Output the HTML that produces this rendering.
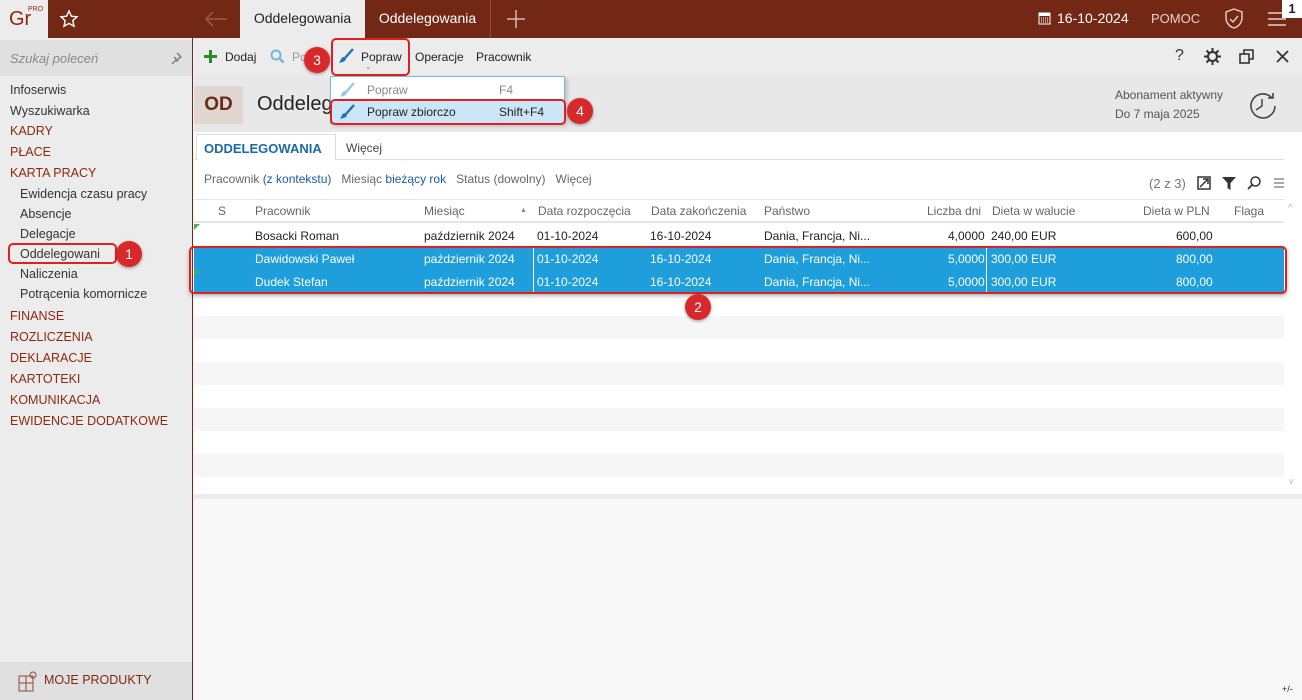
<!DOCTYPE html>
<html><head><meta charset="utf-8"><style>
*{box-sizing:border-box;margin:0;padding:0}
body{width:1302px;height:700px;overflow:hidden;font-family:"Liberation Sans","DejaVu Sans",sans-serif;font-size:12px;color:#222;background:#f8f8f8;position:relative}
.a{position:absolute}
.top{left:0;top:0;width:1302px;height:38px;background:#732815}
.w{color:#fff}
.sb{left:0;top:38px;width:193px;height:662px;background:#ececec;border-right:1px solid #732815}
.sb div.i{position:absolute;left:10px;font-size:12.5px;color:#333}
.sb div.r{color:#8a2a10}
.badge{width:26px;height:26px;border-radius:50%;background:#d8282b;color:#fff;font-size:14px;text-align:center;line-height:26px;box-shadow:0 1px 3px rgba(0,0,0,.4)}
.rb{border:2px solid #e02020;border-radius:5px}
.hd{font-size:12px;color:#666;top:204px}
.row{left:194px;width:1090px;height:23px}
.row span{position:absolute;top:5px;font-size:12px}
.sel span{color:#fff}
</style></head><body>
<div class="a top"></div>
<div class="a" style="left:0;top:0;width:48px;height:38px;background:#ececec"></div>
<div class="a" style="left:9px;top:8px;font-size:20px;color:#8a2a10">Gr</div>
<div class="a" style="left:28px;top:6px;font-size:7px;color:#8a2a10">PRO</div>
<svg class="a" style="left:59px;top:9px" width="20" height="20" viewBox="0 0 20 20"><path d="M10 2l2.4 5.2 5.6.6-4.2 3.8 1.2 5.6L10 14.4 5 17.2l1.2-5.6L2 7.8l5.6-.6z" fill="none" stroke="#fff" stroke-width="1.4"/></svg>
<svg class="a" style="left:204px;top:10px" width="24" height="18"><path d="M2 9h21M9 2L2 9l7 7" fill="none" stroke="#9a5a48" stroke-width="1.5"/></svg>
<div class="a" style="left:240px;top:0;width:125px;height:38px;background:#ececec;font-size:14px;text-align:center;line-height:37px">Oddelegowania</div>
<div class="a w" style="left:365px;top:0;width:126px;height:38px;font-size:14px;text-align:center;line-height:37px;border-right:1px solid #8e4a38">Oddelegowania</div>
<svg class="a" style="left:506px;top:9px" width="20" height="20"><path d="M10 1v18M1 10h18" stroke="#d8b8b0" stroke-width="1.5"/></svg>
<svg class="a" style="left:1038px;top:12px" width="13" height="13"><rect x="1" y="1" width="11" height="11" fill="none" stroke="#fff"/><rect x="1" y="1" width="11" height="3" fill="#fff"/><path d="M3 6h7M3 8h7M3 10h7" stroke="#fff" stroke-dasharray="1 1"/></svg>
<div class="a w" style="left:1057px;top:10px;font-size:14px">16-10-2024</div>
<div class="a" style="left:1151px;top:11px;font-size:13px;color:#e8d0c8">POMOC</div>
<svg class="a" style="left:1224px;top:8px" width="20" height="22"><path d="M10 1l8 3v6c0 5-4 9-8 10-4-1-8-5-8-10V4z" fill="none" stroke="#e8d0c8" stroke-width="1.4"/><path d="M6 11l3 3 5-6" fill="none" stroke="#e8d0c8" stroke-width="1.4"/></svg>
<svg class="a" style="left:1268px;top:12px" width="20" height="14"><path d="M0 1h18M0 7h18M0 13h18" stroke="#e8d0c8" stroke-width="1.4"/></svg>
<div class="a" style="left:1282px;top:0;width:20px;height:18px;background:#fff;font-weight:bold;font-size:13px;text-align:center;line-height:18px">1</div>

<div class="a sb">
<div class="a" style="left:0;top:2px;width:192px;height:36px;background:#e0e0e0"></div>
<div class="a" style="left:10px;top:13px;font-style:italic;color:#888;font-size:13px">Szukaj poleceń</div>
<svg class="a" style="left:170px;top:14px" width="12" height="12"><path d="M7 1l4 4-2 1-2 3-1-1-4 4M4 5l3 3" stroke="#888" stroke-width="1.6" fill="none"/></svg>
<div class="i" style="top:45px">Infoserwis</div>
<div class="i" style="top:66px">Wyszukiwarka</div>
<div class="i r" style="top:86px">KADRY</div>
<div class="i r" style="top:107px">PŁACE</div>
<div class="i r" style="top:128px">KARTA PRACY</div>
<div class="i" style="top:149px;left:20px">Ewidencja czasu pracy</div>
<div class="i" style="top:169px;left:20px">Absencje</div>
<div class="i" style="top:189px;left:20px">Delegacje</div>
<div class="i" style="top:209px;left:20px">Oddelegowani</div>
<div class="i" style="top:229px;left:20px">Naliczenia</div>
<div class="i" style="top:249px;left:20px">Potrącenia komornicze</div>
<div class="i r" style="top:271px">FINANSE</div>
<div class="i r" style="top:292px">ROZLICZENIA</div>
<div class="i r" style="top:313px">DEKLARACJE</div>
<div class="i r" style="top:334px">KARTOTEKI</div>
<div class="i r" style="top:355px">KOMUNIKACJA</div>
<div class="i r" style="top:376px">EWIDENCJE DODATKOWE</div>
<div class="a" style="left:0;top:624px;width:192px;height:38px;background:#e0e0e0"></div>
<svg class="a" style="left:18px;top:632px" width="20" height="22"><rect x="1" y="6" width="14" height="15" fill="none" stroke="#8a4a3a"/><path d="M8 6v15M1 13h14" stroke="#8a4a3a"/><circle cx="15" cy="5" r="3" fill="none" stroke="#8a4a3a"/></svg>
<div class="a" style="left:44px;top:635px;font-size:12.5px;color:#7a2a10">MOJE PRODUKTY</div>
</div>
<div class="a rb" style="left:8px;top:243px;width:109px;height:21px"></div>
<div class="a badge" style="left:116px;top:241px">1</div>

<!-- toolbar -->
<div class="a" style="left:194px;top:38px;width:1108px;height:38px;background:#ececec"></div>
<svg class="a" style="left:204px;top:50px" width="13" height="13"><path d="M6.5 0v13M0 6.5h13" stroke="#2a8a2a" stroke-width="3"/></svg>
<div class="a" style="left:225px;top:50px">Dodaj</div>
<svg class="a" style="left:270px;top:49px" width="15" height="15"><circle cx="6" cy="6" r="4.5" fill="none" stroke="#7ab4d4" stroke-width="2"/><path d="M9.5 9.5l4 4" stroke="#7ab4d4" stroke-width="2.4"/></svg>
<div class="a" style="left:292px;top:50px;color:#999">Pokaż</div>
<div class="a badge" style="left:304px;top:47px">3</div>
<div class="a rb" style="left:331px;top:38px;width:79px;height:38px"></div>
<svg class="a" style="left:338px;top:48px" width="16" height="16"><path d="M15 1L7 10" stroke="#1d72b8" stroke-width="2.4"/><path d="M6 9c-3 0-3 3-5 6 3-1 6-1 7-4z" fill="#1d72b8"/></svg>
<div class="a" style="left:361px;top:50px">Popraw</div>
<div class="a" style="left:365px;top:62px;font-size:8px;color:#888">⌄</div>
<div class="a" style="left:415px;top:50px">Operacje</div>
<div class="a" style="left:476px;top:50px">Pracownik</div>
<div class="a" style="left:1175px;top:47px;font-size:16px;color:#333">?</div>
<svg class="a" style="left:1204px;top:48px" width="17" height="17" viewBox="0 0 17 17"><circle cx="8.5" cy="8.5" r="4.5" fill="none" stroke="#333" stroke-width="2"/><path d="M8.5 0v4M8.5 13v4M0 8.5h4M13 8.5h4M2.5 2.5l3 3M11.5 11.5l3 3M2.5 14.5l3-3M11.5 5.5l3-3" stroke="#333" stroke-width="2"/></svg>
<svg class="a" style="left:1239px;top:49px" width="15" height="15"><rect x="1" y="5" width="9" height="9" fill="none" stroke="#333" stroke-width="1.6"/><path d="M5 5V1h9v9h-4" fill="none" stroke="#333" stroke-width="1.6"/></svg>
<svg class="a" style="left:1276px;top:50px" width="13" height="13"><path d="M1 1l11 11M12 1L1 12" stroke="#333" stroke-width="1.8"/></svg>

<!-- header -->
<div class="a" style="left:194px;top:76px;width:1108px;height:56px;background:#e8e8e8"></div>
<div class="a" style="left:194px;top:86px;width:49px;height:38px;background:#e0d6d2;font-size:19px;font-weight:bold;color:#6a2a18;text-align:center;line-height:38px">OD</div>
<div class="a" style="left:257px;top:93px;font-size:20px">Oddeleg</div>
<div class="a" style="left:1115px;top:88px;color:#555">Abonament aktywny</div>
<div class="a" style="left:1115px;top:107px;color:#555">Do 7 maja 2025</div>
<svg class="a" style="left:1248px;top:91px" width="30" height="28"><path d="M24 7A12 12 0 1 0 27 15" fill="none" stroke="#444" stroke-width="1.6"/><path d="M20 7h5V2" fill="none" stroke="#444" stroke-width="1.6"/><path d="M14 8v7l-6 4" fill="none" stroke="#444" stroke-width="1.5"/></svg>

<!-- dropdown -->
<div class="a" style="left:330px;top:76px;width:235px;height:48px;background:#fff;border:1px solid #7ab8e8;box-shadow:2px 2px 4px rgba(0,0,0,.2)"></div>
<svg class="a" style="left:339px;top:82px" width="16" height="16"><path d="M15 1L7 10" stroke="#9ac8e4" stroke-width="2.4"/><path d="M6 9c-3 0-3 3-5 6 3-1 6-1 7-4z" fill="#9ac8e4"/></svg>
<div class="a" style="left:367px;top:83px;color:#888">Popraw</div>
<div class="a" style="left:499px;top:83px;color:#888">F4</div>
<div class="a" style="left:331px;top:100px;width:233px;height:23px;background:#cde6f7"></div>
<div class="a rb" style="left:330px;top:99px;width:236px;height:26px"></div>
<svg class="a" style="left:339px;top:104px" width="16" height="16"><path d="M15 1L7 10" stroke="#1d72b8" stroke-width="2.4"/><path d="M6 9c-3 0-3 3-5 6 3-1 6-1 7-4z" fill="#1d72b8"/></svg>
<div class="a" style="left:367px;top:105px">Popraw zbiorczo</div>
<div class="a" style="left:499px;top:105px">Shift+F4</div>
<div class="a badge" style="left:567px;top:98px">4</div>

<!-- content -->
<div class="a" style="left:194px;top:132px;width:1108px;height:364px;background:#fff"></div>
<div class="a" style="left:194px;top:159px;width:1090px;height:1px;background:#ddd"></div>
<div class="a" style="left:196px;top:134px;width:140px;height:26px;background:#fff;border:1px solid #ddd;border-bottom:none"></div>
<div class="a" style="left:204px;top:141px;font-weight:bold;color:#1a6aa8;font-size:13px">ODDELEGOWANIA</div>
<div class="a" style="left:346px;top:141px;color:#444">Więcej</div>
<div class="a" style="left:204px;top:172px;color:#666">Pracownik <span style="color:#1a5aa8">(z kontekstu)</span>&nbsp;&nbsp; Miesiąc <span style="color:#1a5aa8">bieżący rok</span>&nbsp;&nbsp; Status (dowolny)&nbsp;&nbsp; Więcej</div>
<div class="a" style="left:1149px;top:176px;color:#777;font-size:13px">(2 z 3)</div>
<svg class="a" style="left:1197px;top:176px" width="14" height="14"><rect x="1" y="1" width="12" height="12" fill="none" stroke="#333" stroke-width="1.5"/><path d="M3 11l8-8M6 3h5v5" stroke="#333" stroke-width="1.5" fill="none"/></svg>
<svg class="a" style="left:1222px;top:176px" width="14" height="14"><path d="M0 1h14L8.5 7v7L5.5 12V7z" fill="#333"/></svg>
<svg class="a" style="left:1247px;top:176px" width="14" height="14"><circle cx="8.5" cy="5.5" r="4.5" fill="none" stroke="#333" stroke-width="1.5"/><path d="M5.5 8.5L1 13" stroke="#333" stroke-width="1.8"/></svg>
<svg class="a" style="left:1274px;top:178px" width="10" height="10"><path d="M0 1h10M0 5h10M0 9h10" stroke="#555"/></svg>

<div class="a" style="left:194px;top:199px;width:1090px;height:24px;border-top:1px solid #e4e4e4;border-bottom:2px solid #e4e4e4"></div>
<div class="a hd" style="left:218px">S</div>
<div class="a hd" style="left:255px">Pracownik</div>
<div class="a hd" style="left:424px">Miesiąc</div>
<div class="a" style="left:520px;top:207px;font-size:7px;color:#888">▲</div>
<div class="a hd" style="left:538px">Data rozpoczęcia</div>
<div class="a hd" style="left:651px">Data zakończenia</div>
<div class="a hd" style="left:764px">Państwo</div>
<div class="a hd" style="left:927px">Liczba dni</div>
<div class="a hd" style="left:992px">Dieta w walucie</div>
<div class="a hd" style="left:1143px">Dieta w PLN</div>
<div class="a hd" style="left:1234px">Flaga</div>
<div class="a" style="left:1288px;top:203px;color:#bbb;font-size:10px">^</div>

<div class="a" style="left:194px;top:316px;width:1090px;height:23px;background:#f6f6f6"></div>
<div class="a" style="left:194px;top:362px;width:1090px;height:23px;background:#f6f6f6"></div>
<div class="a" style="left:194px;top:408px;width:1090px;height:23px;background:#f6f6f6"></div>
<div class="a" style="left:194px;top:454px;width:1090px;height:23px;background:#f6f6f6"></div>

<div class="a row" style="top:224px"><span style="left:61px">Bosacki Roman</span><span style="left:230px">październik 2024</span><span style="left:343px">01-10-2024</span><span style="left:456px">16-10-2024</span><span style="left:570px">Dania, Francja, Ni...</span><span style="left:754px">4,0000</span><span style="left:797px">240,00 EUR</span><span style="left:982px">600,00</span></div>
<div class="a" style="left:194px;top:224px;width:0;height:0;border-top:6px solid #4caf50;border-right:6px solid transparent"></div>
<div class="a row sel" style="top:247px;height:46px;background:#1e9fdc"></div>
<div class="a" style="left:533px;top:247px;width:1px;height:46px;background:#fff"></div>
<div class="a" style="left:986px;top:247px;width:1px;height:46px;background:#fff"></div>
<div class="a row sel" style="top:247px"><span style="left:61px">Dawidowski Paweł</span><span style="left:230px">październik 2024</span><span style="left:343px">01-10-2024</span><span style="left:456px">16-10-2024</span><span style="left:570px">Dania, Francja, Ni...</span><span style="left:754px">5,0000</span><span style="left:797px">300,00 EUR</span><span style="left:982px">800,00</span></div>
<div class="a row sel" style="top:270px"><span style="left:61px">Dudek Stefan</span><span style="left:230px">październik 2024</span><span style="left:343px">01-10-2024</span><span style="left:456px">16-10-2024</span><span style="left:570px">Dania, Francja, Ni...</span><span style="left:754px">5,0000</span><span style="left:797px">300,00 EUR</span><span style="left:982px">800,00</span></div>
<div class="a" style="left:194px;top:270px;width:0;height:0;border-top:6px solid #4caf50;border-right:6px solid transparent"></div>
<div class="a rb" style="left:189px;top:246px;width:1098px;height:48px;box-shadow:0 2px 4px rgba(0,0,0,.3)"></div>
<div class="a badge" style="left:685px;top:294px">2</div>

<div class="a" style="left:1289px;top:476px;color:#bbb;font-size:9px">v</div>
<div class="a" style="left:194px;top:494px;width:1108px;height:5px;background:#ececec"></div>
<div class="a" style="left:1282px;top:684px;font-size:9px">+/-</div>
</body></html>
